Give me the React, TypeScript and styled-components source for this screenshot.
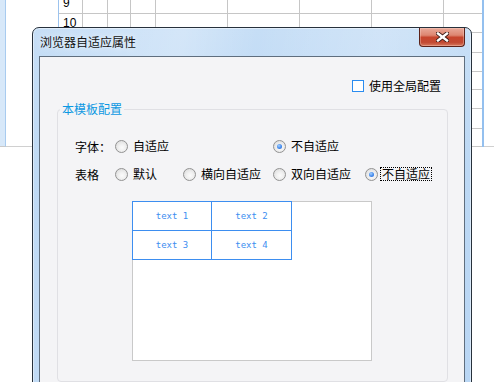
import React from 'react';
import styled, { createGlobalStyle } from 'styled-components';

const GlobalStyle = createGlobalStyle`
  html, body {
    margin: 0;
    padding: 0;
    background: #fff;
  }
  body {
    font-family: "Noto Sans CJK SC", "Liberation Sans", sans-serif;
    font-size: 12px;
    color: #000;
    overflow: hidden;
  }
`;

const Screen = styled.div`
  position: relative;
  width: 494px;
  height: 382px;
  overflow: hidden;
  background: #fff;
`;

/* spreadsheet behind the dialog */
const Sheet = styled.div`
  display: flex;
  height: 147px;
  overflow: hidden;
`;

const SideStrip = styled.div`
  width: 5px;
  background: #d7e8f9;
  border-right: 1px solid #a8cbef;
  border-bottom: 1px solid #c9c9c9;
`;

const SidePane = styled.div<{ $w: number }>`
  width: ${p => p.$w}px;
  flex-shrink: 0;
  border-bottom: 1px solid #d0d0d0;
  box-sizing: border-box;
`;

const Grid = styled.div`
  display: grid;
  grid-template-columns: 24px 25px 23px 25px 72px 72px 72px 72px 38px;
  grid-template-rows: 20px 19px 20px 19px 18px 19px 20px 18px;
  margin-top: -6px;
  border-left: 1px solid #9cc3ee;
  border-right: 2px solid #94c0ef;
  align-self: flex-start;
`;

const Cell = styled.div<{ $last?: boolean }>`
  box-sizing: border-box;
  border-bottom: 1px solid #c6c6c6;
  border-right: ${p => (p.$last ? 'none' : '1px solid #c6c6c6')};
`;

const RowHead = styled(Cell)`
  font-family: "Liberation Sans", Arial, sans-serif;
  font-size: 12px;
  line-height: 19px;
  padding-left: 4px;
  color: #000;
`;

/* dialog window */
const Window = styled.div`
  position: absolute;
  left: 32px;
  top: 27px;
  width: 440px;
  height: 362px;
  box-sizing: border-box;
  border: 1px solid #27313c;
  border-radius: 7px 7px 0 0;
  padding: 0 6px;
  display: flex;
  flex-direction: column;
  background:
    linear-gradient(100deg, rgba(255, 255, 255, 0) 0%, rgba(255, 255, 255, 0.25) 30%, rgba(255, 255, 255, 0) 45%, rgba(255, 255, 255, 0.2) 70%, rgba(255, 255, 255, 0) 90%),
    linear-gradient(180deg, #c6def6 0%, #bcd8f4 40%, #b9d6f4 100%);
  box-shadow: inset 0 0 0 1px rgba(255, 255, 255, 0.45);
`;

const TitleBar = styled.div`
  height: 28px;
  display: flex;
  justify-content: space-between;
  align-items: flex-start;
`;

const Title = styled.div`
  padding-left: 1px;
  line-height: 28px;
  font-size: 12px;
  color: #111;
  text-shadow: 0 0 6px rgba(255, 255, 255, 0.9);
`;

const CloseButton = styled.div`
  width: 46px;
  height: 19px;
  box-sizing: border-box;
  border: 1px solid #5c2219;
  border-top: none;
  border-radius: 0 0 4px 4px;
  display: flex;
  align-items: center;
  justify-content: center;
  background: linear-gradient(180deg, #e9a999 0%, #dd8671 40%, #c7452d 52%, #c24a33 80%, #d77a5f 100%);
  box-shadow: inset 0 0 0 1px rgba(255, 220, 210, 0.35);
`;

const Client = styled.div`
  flex: 1;
  border: 1px solid #5f6e7e;
  background: #f4f4f6;
  display: flex;
  flex-direction: column;
`;

const TopRow = styled.div`
  display: flex;
  justify-content: flex-end;
  align-items: center;
  gap: 5px;
  margin-top: 22px;
  padding-right: 23px;
  line-height: 13px;
`;

const CheckBox = styled.span`
  width: 12px;
  height: 12px;
  box-sizing: border-box;
  border: 1px solid #2a8cf0;
  background: #fff;
`;

const Group = styled.fieldset`
  margin: 10px 16px 0 17px;
  padding: 0 0 20px 0;
  border: 1px solid #e0e0e4;
  border-radius: 4px;
  min-width: 0;
`;

const Legend = styled.legend`
  margin-left: 2px;
  padding: 0 2px;
  color: #0c98e2;
  font-size: 12px;
  line-height: 14px;
`;

const Options = styled.div`
  display: grid;
  grid-template-columns: 40px 68px 90px 92px auto;
  grid-auto-rows: 14px;
  row-gap: 14px;
  padding: 23px 0 0 17px;
  align-items: center;
`;

const Label = styled.span`
  grid-column: 1;
  white-space: nowrap;
`;

const Option = styled.label<{ $col: number }>`
  grid-column: ${p => p.$col};
  display: flex;
  align-items: center;
  gap: 4px;
  white-space: nowrap;
`;

const Radio = styled.span<{ $checked?: boolean }>`
  position: relative;
  width: 13px;
  height: 13px;
  box-sizing: border-box;
  border-radius: 50%;
  border: 1px solid #929292;
  flex-shrink: 0;
  background: radial-gradient(circle at 55% 60%, #fbfbfb 0%, #f1f1f1 35%, #d6d6d6 100%);
  &::after {
    content: '';
    display: ${p => (p.$checked ? 'block' : 'none')};
    position: absolute;
    left: 3px;
    top: 3px;
    width: 5px;
    height: 5px;
    border-radius: 50%;
    background: radial-gradient(circle at 40% 35%, #a6d0ff 0%, #4a90ee 50%, #1d5fd2 100%);
  }
`;

const OptionText = styled.span<{ $focus?: boolean }>`
  line-height: 12px;
  padding: 0 1px;
  outline: ${p => (p.$focus ? '1px dotted #000' : 'none')};
  outline-offset: 0;
  margin-left: ${p => (p.$focus ? '-1px' : '0')};
`;

const Preview = styled.div`
  margin: 20px 0 0 74px;
  width: 240px;
  height: 160px;
  box-sizing: border-box;
  border: 1px solid #c9c9c9;
  background: #fff;
`;

const Table = styled.div`
  margin: -1px 0 0 -1px;
  display: inline-grid;
  grid-template-columns: 78px 79px;
  grid-template-rows: 28px 28px;
  gap: 1px;
  padding: 1px;
  background: #3d8ef0;
`;

const TableCell = styled.div`
  background: #fff;
  display: flex;
  align-items: center;
  justify-content: center;
  color: #3d8ef0;
  font-family: "DejaVu Sans Mono", "Liberation Mono", monospace;
  font-size: 9px;
`;

const columns = 9;
// only the top two row numbers show above the dialog
const rowNumbers = ['9', '10', '', '', '', '', '', ''];

const CloseIcon: React.FC = () => (
  <svg width="13" height="10" viewBox="0 0 13 10">
    <path d="M2 1.5 L11 8.5 M11 1.5 L2 8.5" stroke="#3b1a16" strokeWidth="4.2" strokeLinecap="square" />
    <path d="M2 1.5 L11 8.5 M11 1.5 L2 8.5" stroke="#ffffff" strokeWidth="2.4" strokeLinecap="square" />
  </svg>
);

const App: React.FC = () => {
  return (
    <Screen>
      <GlobalStyle />
      <Sheet>
        <SideStrip />
        <SidePane $w={52} />
        <Grid>
          {rowNumbers.map((n, r) => (
            <React.Fragment key={r}>
              <RowHead>{n}</RowHead>
              {Array.from({ length: columns - 1 }).map((_, i) => (
                <Cell key={i} $last={i === columns - 2} />
              ))}
            </React.Fragment>
          ))}
        </Grid>
        <SidePane $w={10} />
      </Sheet>

      <Window>
        <TitleBar>
          <Title>浏览器自适应属性</Title>
          <CloseButton>
            <CloseIcon />
          </CloseButton>
        </TitleBar>
        <Client>
          <TopRow>
            <CheckBox />
            <span>使用全局配置</span>
          </TopRow>
          <Group>
            <Legend>本模板配置</Legend>
            <Options>
              <Label>字体：</Label>
              <Option $col={2}>
                <Radio />
                <OptionText>自适应</OptionText>
              </Option>
              <Option $col={4}>
                <Radio $checked />
                <OptionText>不自适应</OptionText>
              </Option>

              <Label>表格</Label>
              <Option $col={2}>
                <Radio />
                <OptionText>默认</OptionText>
              </Option>
              <Option $col={3}>
                <Radio />
                <OptionText>横向自适应</OptionText>
              </Option>
              <Option $col={4}>
                <Radio />
                <OptionText>双向自适应</OptionText>
              </Option>
              <Option $col={5}>
                <Radio $checked />
                <OptionText $focus>不自适应</OptionText>
              </Option>
            </Options>
            <Preview>
              <Table>
                <TableCell>text 1</TableCell>
                <TableCell>text 2</TableCell>
                <TableCell>text 3</TableCell>
                <TableCell>text 4</TableCell>
              </Table>
            </Preview>
          </Group>
        </Client>
      </Window>
    </Screen>
  );
};

export default App;
